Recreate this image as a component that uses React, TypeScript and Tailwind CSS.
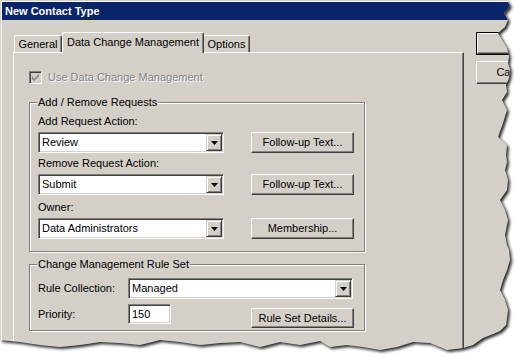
import type { ReactNode } from 'react';

const raised =
  'border border-t-white border-l-white border-r-[#404040] border-b-[#404040] shadow-[inset_-1px_-1px_0_#808080] bg-[#d4d0c8]';
const sunken =
  'border border-t-[#808080] border-l-[#808080] border-r-white border-b-white shadow-[inset_1px_1px_0_#404040,inset_-1px_-1px_0_#d4d0c8]';

// torn paper outline: right edge going down, then bottom edge going left
const edge: [number, number][] = [
  [507, 0], [510, 6], [504, 13], [508, 20], [505, 27], [498, 33], [502, 40], [507, 48],
  [509, 56], [508, 63], [510, 70], [509, 78], [506, 85], [507, 92], [502, 100], [507, 110],
  [503, 123], [498, 137], [507, 145], [506, 155], [507, 162], [505, 170], [508, 180],
  [507, 190], [500, 200], [505, 210], [508, 220], [505, 235], [507, 245], [509, 250],
  [510, 260], [507, 270], [503, 280], [500, 290], [505, 300], [508, 310], [507, 318],
  [506, 325], [500, 331], [493, 334], [483, 338], [473, 345], [463, 348], [447, 350],
  [430, 343], [413, 342], [397, 347], [380, 350], [363, 347], [347, 345], [330, 347],
  [320, 341], [300, 345], [280, 342], [260, 347], [240, 342], [220, 343], [200, 345],
  [180, 342], [160, 340], [140, 345], [120, 343], [100, 342], [80, 345], [60, 347],
  [40, 345], [20, 342], [0, 340],
];
const page = 'M0,0 ' + edge.map(([x, y]) => `L${x},${y}`).join(' ') + ' Z';
const outside = 'M0,0 H516 V358 H0 Z ' + page;

function Button({ children, className = '' }: { children: ReactNode; className?: string }) {
  return <div className={`${raised} shrink-0 flex items-center justify-center ${className}`}>{children}</div>;
}

function DropArrow() {
  return (
    <div className="ml-auto h-full w-[16px] shrink-0 border border-t-[#d4d0c8] border-l-[#d4d0c8] border-r-[#404040] border-b-[#404040] shadow-[inset_1px_1px_0_#fff,inset_-1px_-1px_0_#808080] bg-[#d4d0c8] flex items-center justify-center">
      <svg width="7" height="4" viewBox="0 0 7 4">
        <path d="M0,0 H7 L3.5,4 Z" fill="#000" />
      </svg>
    </div>
  );
}

function Combo({ value, className = '' }: { value: string; className?: string }) {
  return (
    <div className={`${sunken} shrink-0 h-[21px] bg-white p-[1px] flex items-center ${className}`}>
      <span className="pl-[2px]">{value}</span>
      <DropArrow />
    </div>
  );
}

function Group({ title, className = '', children }: { title: string; className?: string; children: ReactNode }) {
  return (
    <div className={`relative w-[336px] border border-[#808080] shadow-[1px_1px_0_#fff,inset_1px_1px_0_#fff] ${className}`}>
      <span className="absolute -top-[7px] left-[7px] px-[1px] bg-[#d4d0c8] leading-[13px]">{title}</span>
      {children}
    </div>
  );
}

export default function App() {
  return (
    <div className="relative w-[516px] h-[358px] overflow-hidden bg-white font-['Liberation_Sans',Arial,sans-serif] text-[11px] text-black">
      <div className="h-full bg-[#d4d0c8] pt-[2px] pl-[2px] shadow-[inset_1px_1px_0_#d4d0c8,inset_2px_2px_0_#fff]">
        <div className="h-[18px] bg-[#0a246a] text-white font-bold pl-[3px] flex items-center">New Contact Type</div>

        <div className="flex pl-[11px] pt-[12px]">
          <div className="w-[451px] shrink-0 flex flex-col">
            <div className="flex items-end h-[20px] pl-[1px]">
              <div className="h-[17px] w-[48px] border-l border-t border-white border-r border-r-[#404040] shadow-[inset_-1px_0_0_#808080] rounded-t-[2px] flex items-center justify-center">
                General
              </div>
              <div className="relative z-10 -mb-px h-[21px] w-[142px] bg-[#d4d0c8] border-l border-t border-white border-r border-r-[#404040] shadow-[inset_-1px_0_0_#808080] rounded-t-[2px] flex items-center justify-center pb-[2px]">
                Data Change Management
              </div>
              <div className="h-[17px] w-[46px] border-t border-white border-r border-r-[#404040] shadow-[inset_-1px_0_0_#808080] rounded-tr-[2px] flex items-center justify-center">
                Options
              </div>
            </div>

            <div className="h-[320px] border-l border-t border-white border-r border-r-[#404040] shadow-[inset_-1px_0_0_#808080] pl-[15px] pt-[18px]">
              <div className="flex items-center h-[13px]">
                <div className={`${sunken} w-[13px] h-[13px] bg-[#d4d0c8] flex items-center justify-center`}>
                  <svg width="7" height="7" viewBox="0 0 7 7">
                    <path d="M0,2 L0,5 L2,7 L7,2 L7,0 L2,5 Z" fill="#808080" />
                  </svg>
                </div>
                <span className="ml-[6px] text-[#808080] [text-shadow:1px_1px_0_#fff]">Use Data Change Management</span>
              </div>

              <Group title="Add / Remove Requests" className="mt-[18px] h-[150px] pl-[8px] pt-[12px]">
                <div className="leading-[13px]">Add Request Action:</div>
                <div className="flex mt-[4px]">
                  <Combo value="Review" className="w-[186px]" />
                  <Button className="ml-[27px] w-[103px] h-[21px]">Follow-up Text...</Button>
                </div>
                <div className="leading-[13px] mt-[4px]">Remove Request Action:</div>
                <div className="flex mt-[4px]">
                  <Combo value="Submit" className="w-[186px]" />
                  <Button className="ml-[27px] w-[103px] h-[21px]">Follow-up Text...</Button>
                </div>
                <div className="leading-[13px] mt-[6px]">Owner:</div>
                <div className="flex mt-[4px]">
                  <Combo value="Data Administrators" className="w-[186px]" />
                  <Button className="ml-[27px] w-[103px] h-[21px]">Membership...</Button>
                </div>
              </Group>

              <Group title="Change Management Rule Set" className="mt-[12px] h-[67px] pl-[8px] pt-[13px]">
                <div className="flex items-center">
                  <span className="w-[90px] shrink-0">Rule Collection:</span>
                  <Combo value="Managed" className="w-[225px]" />
                </div>
                <div className="flex items-start mt-[5px]">
                  <span className="w-[90px] shrink-0 leading-[20px]">Priority:</span>
                  <div className={`${sunken} shrink-0 w-[43px] h-[20px] bg-white flex items-center pl-[3px]`}>150</div>
                  <Button className="ml-[80px] mt-[4px] w-[103px] h-[20px]">Rule Set Details...</Button>
                </div>
              </Group>
            </div>
          </div>

          <div className="ml-[12px] shrink-0 flex flex-col gap-[6px]">
            <div className="w-[75px] h-[23px] border border-black flex">
              <Button className="flex-1">OK</Button>
            </div>
            <Button className="w-[75px] h-[23px]">Cancel</Button>
          </div>
        </div>
      </div>

      <svg className="absolute inset-0 pointer-events-none" width="516" height="358" viewBox="0 0 516 358">
        <defs>
          <filter id="blur" x="-10%" y="-10%" width="120%" height="120%">
            <feGaussianBlur stdDeviation="1.6" />
          </filter>
          <clipPath id="out">
            <path d={outside} clipRule="evenodd" />
          </clipPath>
        </defs>
        <path d={outside} fill="#fff" fillRule="evenodd" />
        <g clipPath="url(#out)">
          <path d={page} transform="translate(2,2)" fill="#000" opacity="0.85" filter="url(#blur)" />
        </g>
      </svg>
    </div>
  );
}
